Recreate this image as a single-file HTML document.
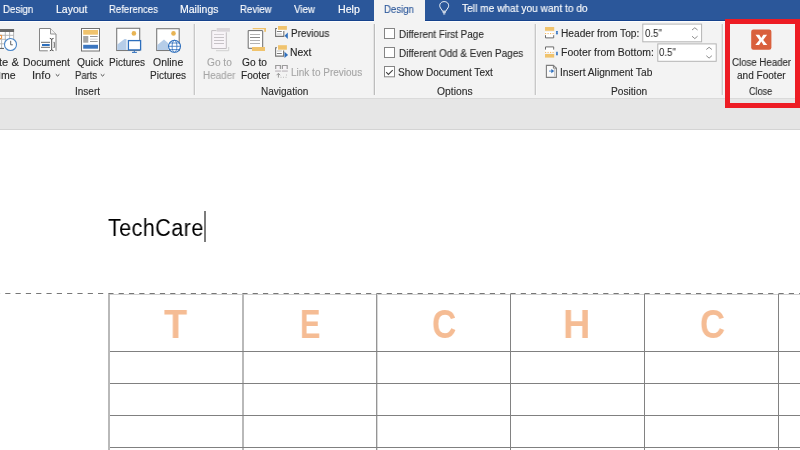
<!DOCTYPE html>
<html><head><meta charset="utf-8">
<style>
html,body{margin:0;padding:0;width:800px;height:450px;overflow:hidden;background:#fff;}
body{position:relative;font-family:"Liberation Sans",sans-serif;}
.t{position:absolute;white-space:pre;transform-origin:0 0;font-family:"Liberation Sans",sans-serif;will-change:transform;-webkit-text-stroke:0.12px currentColor;}
.a{position:absolute;}
svg{position:absolute;overflow:visible;}
</style></head><body>
<!-- tab bar -->
<div class="a" style="left:0;top:0;width:800px;height:21px;background:#2b579a"></div>
<div class="a" style="left:0;top:20px;width:800px;height:1px;background:#15428c"></div>
<div class="a" style="left:374px;top:0;width:51px;height:21px;background:#f3f3f3"></div>
<!-- ribbon -->
<div class="a" style="left:0;top:21px;width:800px;height:77px;background:#f3f3f3"></div>
<div class="a" style="left:0;top:98px;width:800px;height:1px;background:#dadada"></div>
<div class="a" style="left:0;top:99px;width:800px;height:30px;background:#e6e6e6"></div>
<div class="a" style="left:0;top:129px;width:800px;height:1px;background:#d4d4d4"></div>
<!-- separators -->
<div class="a" style="left:0;top:21px;width:374px;height:1px;background:#fdfdfd"></div><div class="a" style="left:425px;top:21px;width:375px;height:1px;background:#fdfdfd"></div>
<div class="a" style="left:193px;top:24px;width:1px;height:71px;background:#e4e4e4"></div>
<div class="a" style="left:194px;top:24px;width:1px;height:71px;background:#c8c8c8"></div>
<div class="a" style="left:195px;top:24px;width:1px;height:71px;background:#f8f8f8"></div>
<div class="a" style="left:373px;top:24px;width:1px;height:71px;background:#e4e4e4"></div>
<div class="a" style="left:374px;top:24px;width:1px;height:71px;background:#bdbdbd"></div>
<div class="a" style="left:375px;top:24px;width:1px;height:71px;background:#f8f8f8"></div>
<div class="a" style="left:534px;top:24px;width:1px;height:71px;background:#e4e4e4"></div>
<div class="a" style="left:535px;top:24px;width:1px;height:71px;background:#c8c8c8"></div>
<div class="a" style="left:536px;top:24px;width:1px;height:71px;background:#f8f8f8"></div>
<div class="a" style="left:721px;top:24px;width:1px;height:71px;background:#e4e4e4"></div>
<div class="a" style="left:722px;top:24px;width:1px;height:71px;background:#cdcdcd"></div>
<div class="a" style="left:723px;top:24px;width:1px;height:71px;background:#f8f8f8"></div>
<!-- ICONS -->
<!-- Date & Time -->
<svg style="left:0;top:0" width="800" height="100">
<g shape-rendering="auto">
 <rect x="0" y="29" width="14.1" height="3" fill="#6a6a6a"/>
 <rect x="0" y="32" width="14" height="16.5" fill="#fff"/>
 <g stroke="#b0b0b0" stroke-width="0.9" fill="none">
  <path d="M13.6 32V39 M9.6 32V39 M5.3 32V48 M1.6 39.5V48 M0 35.3H14 M0 39.3H6 M0 43.8H4.5"/>
 </g>
 <path d="M0 48.4H4" stroke="#555" stroke-width="1"/>
 <path d="M0 35.3H1.6V38.6H0" stroke="#e98c35" fill="none" stroke-width="1"/>
 <circle cx="10.5" cy="44.5" r="6" fill="#fff" stroke="#4a86c8" stroke-width="1.1"/>
 <path d="M10.7 40.8V44.8H12.8" stroke="#555" stroke-width="0.9" fill="none"/>
</g>
<!-- Document Info -->
<g>
 <path d="M39.5 28.5H50.5L56 34V51H39.5Z" fill="#fff"/>
 <path d="M47.8 50.8H39.5V28.5H50.5L56 34V50.8" stroke="#858585" stroke-width="1" fill="none"/>
 <path d="M50.5 28.5V34H56" stroke="#959595" stroke-width="1" fill="#f2f2f2"/>
 <path d="M41 42.3H50 M41 47.3H50" stroke="#5a5a5a" stroke-width="0.9"/>
 <rect x="42" y="44" width="7.7" height="2" fill="#2e6fbd"/>
 <path d="M51.7 39.8V49.3 M49.8 38.4Q51.7 38.4 51.7 39.8Q51.7 38.4 53.6 38.4 M49.8 50.7Q51.7 50.7 51.7 49.3Q51.7 50.7 53.6 50.7" stroke="#3c3c3c" stroke-width="0.9" fill="none"/>
 <path d="M53.6 42.3H54.3V47.5H53.6" stroke="#555" stroke-width="0.9" fill="none"/>
</g>
<!-- Quick Parts -->
<g>
 <rect x="81.5" y="28.5" width="18" height="22.5" fill="#fff" stroke="#707070" stroke-width="1"/>
 <rect x="83.2" y="30" width="14.8" height="4.7" fill="#f0c36d"/>
 <rect x="83.2" y="36" width="5.1" height="6.7" fill="#a6a6a6"/>
 <path d="M90 36.5H97.7 M90 41.5H97.7" stroke="#8a8a8a" stroke-width="0.9"/>
 <path d="M90 39.2H97.7" stroke="#c8c8c8" stroke-width="0.9"/>
 <rect x="83.2" y="44.8" width="14.8" height="3.9" fill="#3b76c0"/>
</g>
<!-- Pictures -->
<g>
 <rect x="116.7" y="28.3" width="23" height="22.2" fill="#fff" stroke="#7a7a7a" stroke-width="1.1"/>
 <circle cx="133.9" cy="33.4" r="2.3" fill="#e8b454"/>
 <path d="M117.3 44.4L124.5 39.1H126.5V50H117.3Z" fill="#b6cde8"/>
 <rect x="128.4" y="40.6" width="12.2" height="9.3" fill="#fff" stroke="#2e6fbd" stroke-width="1.3"/>
 <path d="M134.3 50.3V52.2 M132 52.4H136.9" stroke="#2e6fbd" stroke-width="1"/>
</g>
<!-- Online Pictures -->
<g>
 <rect x="156.7" y="28.7" width="22.5" height="21.8" fill="#fff" stroke="#7a7a7a" stroke-width="1.1"/>
 <circle cx="173.5" cy="33.4" r="2.3" fill="#e8b454"/>
 <path d="M157.3 45L164 39.5L168 43V50H157.3Z" fill="#b6cde8"/>
 <circle cx="174.5" cy="46.3" r="6" fill="#fff" stroke="#2e6fbd" stroke-width="1.1"/>
 <ellipse cx="174.5" cy="46.3" rx="2.4" ry="6" fill="none" stroke="#2e6fbd" stroke-width="0.8"/>
 <path d="M168.5 46.3H180.5 M169.5 43H179.5 M169.5 49.6H179.5" stroke="#2e6fbd" stroke-width="0.8"/>
</g>
<!-- Go to Header (disabled) -->
<g>
 <rect x="211.7" y="30.6" width="14.6" height="17.9" fill="#f8f4f8"/>
 <path d="M216.5 30.6H211.7V48.5H226.3V32.3" stroke="#c2bec2" stroke-width="1" fill="none"/>
 <rect x="216.7" y="28" width="13.2" height="3.7" fill="#dad6da"/>
 <path d="M214 34.5H224" stroke="#d4d0d4" stroke-width="1"/>
 <path d="M214 37.5H224 M214 40.5H224 M214 43.5H224" stroke="#c6c2c6" stroke-width="1"/>
 <path d="M216 50.7H228.7V47" stroke="#d0d0d0" stroke-width="1" fill="none"/>
</g>
<!-- Go to Footer -->
<g>
 <rect x="248.2" y="30.6" width="14.5" height="17.7" fill="#fff"/>
 <path d="M252.7 28.6H265.3" stroke="#f0c36d" stroke-width="1.2" fill="none"/>
 <rect x="264.2" y="28" width="1.8" height="3.8" fill="#f0c36d"/>
 <path d="M262.7 31V48.3H248.2V30.6H262.7" stroke="#6a6a6a" stroke-width="1" fill="none"/>
 <path d="M250 34.5H260 M250 40.5H260 M250 43.5H260" stroke="#b4b4b4" stroke-width="1"/>
 <path d="M250 37.5H260" stroke="#8a8a8a" stroke-width="1"/>
 <rect x="252" y="47" width="13" height="4" fill="#f0c36d"/>
</g>
<!-- Previous -->
<g>
 <rect x="275.6" y="28.5" width="8.2" height="7.9" fill="#fff"/>
 <rect x="278" y="26" width="8.9" height="3.8" fill="#f0c36d"/>
 <path d="M277 28.5H275.6V36.4H283.8V30.9" stroke="#747474" stroke-width="1.1" fill="none"/>
 <path d="M276.9 31.5H281.8" stroke="#707070" stroke-width="0.9"/>
 <path d="M276.9 34H281.8" stroke="#bdbdbd" stroke-width="1"/>
 <path d="M284.6 35.7L287.8 32.6V38.9Z" fill="#2e6fbd"/>
</g>
<!-- Next -->
<g>
 <rect x="275.6" y="47.7" width="8" height="8.4" fill="#fff"/>
 <rect x="278" y="45.2" width="8.9" height="4.5" fill="#f0c36d"/>
 <path d="M277 47.7H275.6V56.1H283.6V50.6" stroke="#747474" stroke-width="1.1" fill="none"/>
 <path d="M276.9 51H281.8" stroke="#bdbdbd" stroke-width="1"/>
 <path d="M276.9 53.5H281.8" stroke="#707070" stroke-width="0.9"/>
 <path d="M284.5 51.7L288.1 55L284.5 58Z" fill="#2e6fbd"/>
</g>
<!-- Link to Previous (disabled) -->
<g>
 <path d="M275.7 69V65.5H280.4V69 M282.4 69V65.5H287.2V69" stroke="#9c9c9c" stroke-width="1.2" fill="#f6f2f6"/>
 <rect x="275.1" y="70.2" width="5.8" height="1.8" fill="#cfcbcf"/>
 <rect x="281.8" y="70.2" width="6" height="1.8" fill="#cfcbcf"/>
 <path d="M278.4 77.6V73.5 M276.6 75.2L278.4 73.3L280.2 75.2" stroke="#9a9a9a" stroke-width="1" fill="none"/>
 <path d="M280.5 77.3H287" stroke="#b4b4b4" stroke-width="0.9" stroke-dasharray="1 1.5"/>
 <path d="M286.5 74.5V77" stroke="#b4b4b4" stroke-width="0.9" stroke-dasharray="1 1.5"/>
</g>
<!-- Checkboxes -->
<g fill="#fff" stroke="#858585" stroke-width="1">
 <rect x="384.5" y="28.5" width="10" height="10"/>
 <rect x="384.5" y="47.5" width="10" height="10"/>
 <rect x="384.5" y="66.5" width="10" height="10.3"/>
</g>
<path d="M386.2 72.2L388.4 74.4L392.7 70.1" stroke="#404040" stroke-width="1.05" fill="none"/>
<!-- Header from top icon -->
<g>
 <rect x="545" y="27" width="9.2" height="3.8" fill="#f0c36d"/>
 <rect x="545" y="32" width="9.2" height="6.4" fill="#fff"/>
 <path d="M545 33.6H554.2" stroke="#f2b45a" stroke-width="1" stroke-dasharray="1.2 1.3"/>
 <path d="M545.5 35.2V37.9H553.7V35.2" stroke="#6a6a6a" stroke-width="1" fill="none"/>
 <path d="M555.9 31H558L557.6 32.6L558.1 33.2L557 35.1L555.8 33.2L556.3 32.6Z" fill="#3a78c4"/>
</g>
<!-- Footer from bottom icon -->
<g>
 <rect x="545" y="46.4" width="9.2" height="6.4" fill="#fff"/>
 <path d="M545.5 49.6V46.9H553.7V49.6" stroke="#6a6a6a" stroke-width="1" fill="none"/>
 <path d="M545 52.4H554.2" stroke="#f2b45a" stroke-width="1" stroke-dasharray="1.2 1.3"/>
 <rect x="545" y="54" width="9.2" height="3.6" fill="#f0c36d"/>
 <path d="M555.9 55.2H558L557.6 53.6L558.1 53L557 51.2L555.8 53L556.3 53.6Z" fill="#3a78c4"/>
</g>
<!-- Insert alignment tab -->
<g>
 <path d="M546.4 65.4H553.4L556.4 68.2V77.4H546.4Z" fill="#fafafa" stroke="#7e7e7e" stroke-width="1.1"/>
 <path d="M553.4 65.4V68.2H556.4" stroke="#7e7e7e" stroke-width="1" fill="none"/>
 <path d="M554.6 68.5V76.5" stroke="#c8c8c8" stroke-width="1"/>
 <path d="M549 71.1H552" stroke="#7aa6da" stroke-width="1.3"/>
 <path d="M551.3 68.9L554.2 71.1L551.3 73.3Z" fill="#2e6fbd"/>
</g>
<!-- input boxes -->
<rect x="642.8" y="24.1" width="58.8" height="17.7" fill="#fff" stroke="#b4b4b4" stroke-width="1"/>
<rect x="657.8" y="43.9" width="58.4" height="17.4" fill="#fff" stroke="#b4b4b4" stroke-width="1"/>
<path d="M692 30L694.8 27.8L697.6 30 M692 36.2L694.8 38.6L697.6 36.2" stroke="#707070" stroke-width="0.8" fill="none"/>
<path d="M706.3 49.5L709.1 47.3L711.9 49.5 M706.3 55.7L709.1 58.1L711.9 55.7" stroke="#707070" stroke-width="0.8" fill="none"/>
<!-- Close icon -->
<rect x="751.2" y="29.5" width="20.2" height="20.2" rx="2.2" fill="#d9603d"/>
<path d="M755.5 34.8H759.3L761.3 38.1L763.3 34.8H767.1L763.2 39.9L767.3 45H763.5L761.3 41.6L759.1 45H755.3L759.4 39.9Z" fill="#fff"/>
<!-- Lightbulb -->
<path d="M442.4 11.2C442.2 9.6 440.4 8.6 439.9 6.7C439.2 3.8 441.3 1.6 444.2 1.6C447.1 1.6 449.2 3.8 448.5 6.7C448 8.6 446.2 9.6 446 11.2Z M442.6 12.3H445.8 M443.1 13.9H445.3" stroke="#fff" stroke-width="0.95" fill="none" stroke-linejoin="round"/>
</svg>

<div class="t" style="left:2.97px;top:4.49px;font-size:10.5px;line-height:11.731px;color:#ffffff;font-weight:400;transform:scale(0.9272,1.0);-webkit-text-stroke:0.15px #fff;">Design</div>
<div class="t" style="left:55.69px;top:4.49px;font-size:10.5px;line-height:11.731px;color:#ffffff;font-weight:400;transform:scale(0.9944,1.0);-webkit-text-stroke:0.15px #fff;">Layout</div>
<div class="t" style="left:108.52px;top:4.49px;font-size:10.5px;line-height:11.731px;color:#ffffff;font-weight:400;transform:scale(0.9114,1.0);-webkit-text-stroke:0.15px #fff;">References</div>
<div class="t" style="left:179.71px;top:4.49px;font-size:10.5px;line-height:11.731px;color:#ffffff;font-weight:400;transform:scale(0.9955,1.0);-webkit-text-stroke:0.15px #fff;">Mailings</div>
<div class="t" style="left:239.99px;top:4.49px;font-size:10.5px;line-height:11.731px;color:#ffffff;font-weight:400;transform:scale(0.9190,1.0);-webkit-text-stroke:0.15px #fff;">Review</div>
<div class="t" style="left:294.28px;top:4.49px;font-size:10.5px;line-height:11.731px;color:#ffffff;font-weight:400;transform:scale(0.9237,1.0);-webkit-text-stroke:0.15px #fff;">View</div>
<div class="t" style="left:338.40px;top:4.49px;font-size:10.5px;line-height:11.731px;color:#ffffff;font-weight:400;transform:scale(1.0096,1.0);-webkit-text-stroke:0.15px #fff;">Help</div>
<div class="t" style="left:383.79px;top:4.49px;font-size:10.5px;line-height:11.731px;color:#2b579a;font-weight:400;transform:scale(0.9172,1.0);">Design</div>
<div class="t" style="left:462.01px;top:3.49px;font-size:10.5px;line-height:11.731px;color:#ffffff;font-weight:400;transform:scale(0.9692,1.0);-webkit-text-stroke:0.15px #fff;">Tell me what you want to do</div>
<div class="t" style="left:-0.71px;top:56.95px;font-size:10px;line-height:11.172px;color:#2b2b2b;font-weight:400;transform:scale(1.1149,1.0);">te &</div>
<div class="t" style="left:0.93px;top:69.95px;font-size:10px;line-height:11.172px;color:#2b2b2b;font-weight:400;transform:scale(1.0502,1.0);">me</div>
<div class="t" style="left:23.43px;top:56.95px;font-size:10px;line-height:11.172px;color:#2b2b2b;font-weight:400;transform:scale(1.0301,1.0);">Document</div>
<div class="t" style="left:32.25px;top:69.95px;font-size:10px;line-height:11.172px;color:#2b2b2b;font-weight:400;transform:scale(1.1177,1.0);">Info</div>
<div class="t" style="left:77.10px;top:56.95px;font-size:10px;line-height:11.172px;color:#2b2b2b;font-weight:400;transform:scale(1.0280,1.0);">Quick</div>
<div class="t" style="left:74.78px;top:69.95px;font-size:10px;line-height:11.172px;color:#2b2b2b;font-weight:400;transform:scale(0.9474,1.0);">Parts</div>
<div class="t" style="left:109.38px;top:56.95px;font-size:10px;line-height:11.172px;color:#2b2b2b;font-weight:400;transform:scale(0.9991,1.0);">Pictures</div>
<div class="t" style="left:152.89px;top:56.95px;font-size:10px;line-height:11.172px;color:#2b2b2b;font-weight:400;transform:scale(1.0455,1.0);">Online</div>
<div class="t" style="left:149.54px;top:69.95px;font-size:10px;line-height:11.172px;color:#2b2b2b;font-weight:400;transform:scale(0.9996,1.0);">Pictures</div>
<div class="t" style="left:75.02px;top:85.95px;font-size:10px;line-height:11.172px;color:#2b2b2b;font-weight:400;transform:scale(1.0013,1.0);">Insert</div>
<div class="t" style="left:207.44px;top:56.95px;font-size:10px;line-height:11.172px;color:#a6a6a6;font-weight:400;transform:scale(1.0125,1.0);">Go to</div>
<div class="t" style="left:203.04px;top:69.95px;font-size:10px;line-height:11.172px;color:#a6a6a6;font-weight:400;transform:scale(0.9844,1.0);">Header</div>
<div class="t" style="left:242.02px;top:56.95px;font-size:10px;line-height:11.172px;color:#262626;font-weight:400;transform:scale(1.0209,1.0);">Go to</div>
<div class="t" style="left:240.56px;top:69.95px;font-size:10px;line-height:11.172px;color:#262626;font-weight:400;transform:scale(1.0070,1.0);">Footer</div>
<div class="t" style="left:290.69px;top:27.95px;font-size:10px;line-height:11.172px;color:#262626;font-weight:400;transform:scale(0.9838,1.0);">Previous</div>
<div class="t" style="left:290.46px;top:46.95px;font-size:10px;line-height:11.172px;color:#262626;font-weight:400;transform:scale(1.0364,1.0);">Next</div>
<div class="t" style="left:290.65px;top:66.95px;font-size:10px;line-height:11.172px;color:#a6a6a6;font-weight:400;transform:scale(0.9992,1.0);">Link to Previous</div>
<div class="t" style="left:261.32px;top:85.95px;font-size:10px;line-height:11.172px;color:#2b2b2b;font-weight:400;transform:scale(1.0014,1.0);">Navigation</div>
<div class="t" style="left:398.79px;top:28.95px;font-size:10px;line-height:11.172px;color:#2b2b2b;font-weight:400;transform:scale(0.9856,1.0);">Different First Page</div>
<div class="t" style="left:398.77px;top:47.95px;font-size:10px;line-height:11.172px;color:#2b2b2b;font-weight:400;transform:scale(0.9891,1.0);">Different Odd &amp; Even Pages</div>
<div class="t" style="left:398.37px;top:66.95px;font-size:10px;line-height:11.172px;color:#2b2b2b;font-weight:400;transform:scale(1.0051,1.0);">Show Document Text</div>
<div class="t" style="left:437.28px;top:85.95px;font-size:10px;line-height:11.172px;color:#2b2b2b;font-weight:400;transform:scale(1.0316,1.0);">Options</div>
<div class="t" style="left:560.79px;top:27.95px;font-size:10px;line-height:11.172px;color:#2b2b2b;font-weight:400;transform:scale(1.0154,1.0);">Header from Top:</div>
<div class="t" style="left:560.58px;top:46.95px;font-size:10px;line-height:11.172px;color:#2b2b2b;font-weight:400;transform:scale(1.0438,1.0);">Footer from Bottom:</div>
<div class="t" style="left:560.28px;top:66.95px;font-size:10px;line-height:11.172px;color:#2b2b2b;font-weight:400;transform:scale(1.0209,1.0);">Insert Alignment Tab</div>
<div class="t" style="left:610.96px;top:85.95px;font-size:10px;line-height:11.172px;color:#2b2b2b;font-weight:400;transform:scale(1.0177,1.0);">Position</div>
<div class="t" style="left:644.93px;top:27.95px;font-size:10px;line-height:11.172px;color:#1e1e1e;font-weight:400;transform:scale(0.9684,1.0);-webkit-text-stroke:0;">0.5"</div>
<div class="t" style="left:658.85px;top:46.95px;font-size:10px;line-height:11.172px;color:#1e1e1e;font-weight:400;transform:scale(0.9662,1.0);-webkit-text-stroke:0;">0.5"</div>
<div class="t" style="left:731.94px;top:56.95px;font-size:10px;line-height:11.172px;color:#2b2b2b;font-weight:400;transform:scale(0.9665,1.0);">Close Header</div>
<div class="t" style="left:737.30px;top:69.95px;font-size:10px;line-height:11.172px;color:#2b2b2b;font-weight:400;transform:scale(1.0043,1.0);">and Footer</div>
<div class="t" style="left:749.08px;top:85.95px;font-size:10px;line-height:11.172px;color:#2b2b2b;font-weight:400;transform:scale(0.9041,1.0);">Close</div>
<div class="t" style="left:108.25px;top:216.18px;font-size:23px;line-height:25.696px;color:#000;font-weight:400;transform:scale(0.9344,1.0);-webkit-text-stroke:0;letter-spacing:0.5px;">TechCare</div>
<div class="t" style="left:164.18px;top:302.33px;font-size:41px;line-height:45.805px;color:#f5bc94;font-weight:700;transform:scale(0.9249,1.0);-webkit-text-stroke:0;">T</div>
<div class="t" style="left:299.84px;top:302.33px;font-size:41px;line-height:45.805px;color:#f5bc94;font-weight:700;transform:scale(0.7462,1.0);-webkit-text-stroke:0;">E</div>
<div class="t" style="left:431.88px;top:302.33px;font-size:41px;line-height:45.805px;color:#f5bc94;font-weight:700;transform:scale(0.8227,1.0);-webkit-text-stroke:0;">C</div>
<div class="t" style="left:563.25px;top:302.33px;font-size:41px;line-height:45.805px;color:#f5bc94;font-weight:700;transform:scale(0.9214,1.0);-webkit-text-stroke:0;">H</div>
<div class="t" style="left:700.23px;top:302.33px;font-size:41px;line-height:45.805px;color:#f5bc94;font-weight:700;transform:scale(0.8436,1.0);-webkit-text-stroke:0;">C</div>
<div class="a" style="left:0;top:72px;width:1px;height:7px;background:#cfcfcf"></div>
<!-- table -->
<svg style="left:0;top:0" width="800" height="450">
 <path d="M0 293.5H800" stroke="#777" stroke-width="1" stroke-dasharray="5.2 5.11" stroke-dashoffset="5.08"/>
 <path d="M110 294.5H800" stroke="#cfcfcf" stroke-width="1"/>
 <g fill="#b9b9b9">
  <rect x="108" y="294" width="2" height="156"/>
  <rect x="242" y="294" width="2" height="156"/>
 </g>
 <rect x="376" y="294" width="1" height="156" fill="#959595"/>
 <rect x="377" y="294" width="1" height="156" fill="#d8d8d8"/>
 <g fill="#828282">
  <rect x="510" y="294" width="1" height="156"/>
  <rect x="644" y="294" width="1" height="156"/>
  <rect x="778" y="294" width="1" height="156"/>
 </g>
 <g stroke="#808080" stroke-width="1">
  <path d="M110 351.5H800 M110 383.5H800 M110 415.5H800 M110 447.5H800"/>
 </g>
</svg>
<!-- chevrons -->
<svg style="left:0;top:0" width="800" height="100">
 <path d="M55.8 74.3L57.6 76L59.4 74.3 M100.8 74.3L102.6 76L104.4 74.3" stroke="#444" stroke-width="1" fill="none"/>
</svg>

<!-- red border -->
<div class="a" style="left:725px;top:19px;width:65px;height:79px;border:5px solid #ed1c24"></div>
<!-- document -->
<div class="a" style="left:204px;top:211px;width:2px;height:31px;background:#7c7c7c"></div>
</body></html>
